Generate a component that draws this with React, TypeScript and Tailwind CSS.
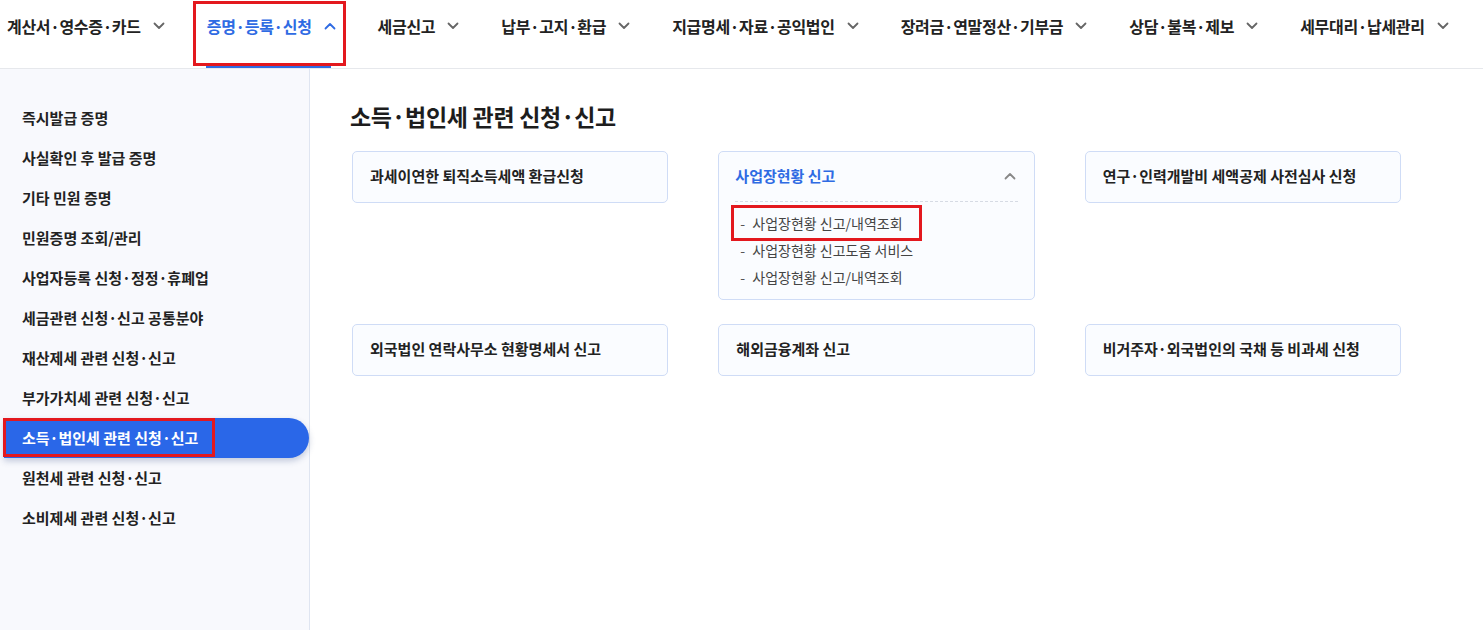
import { ReactNode } from "react";

const topMenu = [
  "계산서·영수증·카드",
  "증명·등록·신청",
  "세금신고",
  "납부·고지·환급",
  "지급명세·자료·공익법인",
  "장려금·연말정산·기부금",
  "상담·불복·제보",
  "세무대리·납세관리",
];

const sideMenu = [
  "즉시발급 증명",
  "사실확인 후 발급 증명",
  "기타 민원 증명",
  "민원증명 조회/관리",
  "사업자등록 신청·정정·휴폐업",
  "세금관련 신청·신고 공통분야",
  "재산제세 관련 신청·신고",
  "부가가치세 관련 신청·신고",
  "소득·법인세 관련 신청·신고",
  "원천세 관련 신청·신고",
  "소비제세 관련 신청·신고",
];

const subLinks = ["사업장현황 신고/내역조회", "사업장현황 신고도움 서비스", "사업장현황 신고/내역조회"];

function Chevron({ up = false, className = "" }: { up?: boolean; className?: string }) {
  return (
    <svg width="12" height="8" viewBox="0 0 12 8" fill="none" className={className}>
      <path
        d={up ? "M1.5 6.5L6 2l4.5 4.5" : "M1.5 1.5L6 6l4.5-4.5"}
        stroke="currentColor"
        strokeWidth="1.8"
        strokeLinecap="round"
        strokeLinejoin="round"
      />
    </svg>
  );
}

// red outline used to call out an element
function Mark({ className }: { className: string }) {
  return <div className={`pointer-events-none absolute border-[3px] border-[#e3181e] ${className}`} />;
}

function Card({ children }: { children: ReactNode }) {
  return (
    <div className="flex h-[52px] items-center rounded-[5px] border border-[#cfdcf6] bg-[#fafcff] pl-[17px] text-[15px] font-semibold text-[#222]">
      {children}
    </div>
  );
}

export default function App() {
  return (
    <div
      className="flex h-screen flex-col overflow-hidden bg-white"
      style={{ fontFamily: '"Noto Sans CJK KR", "Noto Sans", sans-serif' }}
    >
      {/* top navigation */}
      <nav className="flex h-[69px] shrink-0 gap-[42px] border-b border-[#e6e8ec] pl-[7px]">
        {topMenu.map((label, i) => {
          const active = i === 1;
          return (
            <div key={label} className="relative flex items-start pt-[14px]">
              <div
                className={`flex items-center gap-[12px] text-[16px] font-semibold tracking-[-0.3px] ${
                  active ? "text-[#2f6be3]" : "text-[#222]"
                }`}
              >
                <span>{label}</span>
                <Chevron up={active} className={active ? "text-[#2f6be3]" : "text-[#666]"} />
              </div>
              {active && (
                <>
                  <div className="absolute bottom-0 left-[-1px] right-[5px] h-[3px] bg-[#2f6be3]" />
                  <Mark className="left-[-14px] right-[-10px] top-[1px] h-[65px]" />
                </>
              )}
            </div>
          );
        })}
      </nav>

      <div className="flex flex-1">
        {/* left menu */}
        <aside className="w-[310px] shrink-0 border-r border-[#dfe5f1] bg-[#f8f9fd] pt-[29px]">
          <ul>
            {sideMenu.map((label, i) => {
              const active = i === 8;
              return (
                <li key={i} className="relative">
                  {active ? (
                    <div className="ml-[4px] flex h-[40px] items-center rounded-r-[20px] bg-[#2a67e8] pl-[18px] text-[15px] font-bold text-white shadow-[0_3px_6px_rgba(30,60,120,0.25)]">
                      {label}
                    </div>
                  ) : (
                    <div className="flex h-[40px] items-center pl-[22px] text-[15px] font-semibold text-[#222]">
                      {label}
                    </div>
                  )}
                  {active && <Mark className="left-[3px] top-0 h-[39px] w-[212px]" />}
                </li>
              );
            })}
          </ul>
        </aside>

        {/* content */}
        <main className="flex-1 pl-[40px] pt-[30px]">
          <h2 className="text-[23px] font-bold tracking-[-0.3px] text-[#1d1d1d]">소득·법인세 관련 신청·신고</h2>

          <div className="ml-[2px] mt-[17px] grid w-[1049px] grid-cols-3 items-start gap-x-[50px] gap-y-[24px]">
            <Card>과세이연한 퇴직소득세액 환급신청</Card>

            <div className="relative rounded-[5px] border border-[#cfdcf6] bg-[#fafcff] px-[16px] pb-[8px]">
              <div className="flex h-[50px] items-center justify-between border-b border-dashed border-[#d6dbe4]">
                <span className="text-[15px] font-semibold text-[#2f6be3]">사업장현황 신고</span>
                <Chevron up className="mr-[2px] text-[#888]" />
              </div>
              <ul className="pt-[8px]">
                {subLinks.map((s, i) => (
                  <li key={i} className="flex h-[27px] items-center text-[14px] text-[#444]">
                    <span className="w-[17px] pl-[5px] text-[#555]">-</span>
                    {s}
                  </li>
                ))}
              </ul>
              <Mark className="left-[12px] top-[53px] h-[36px] w-[191px]" />
            </div>

            <Card>연구·인력개발비 세액공제 사전심사 신청</Card>
            <Card>외국법인 연락사무소 현황명세서 신고</Card>
            <Card>해외금융계좌 신고</Card>
            <Card>비거주자·외국법인의 국채 등 비과세 신청</Card>
          </div>
        </main>
      </div>
    </div>
  );
}
